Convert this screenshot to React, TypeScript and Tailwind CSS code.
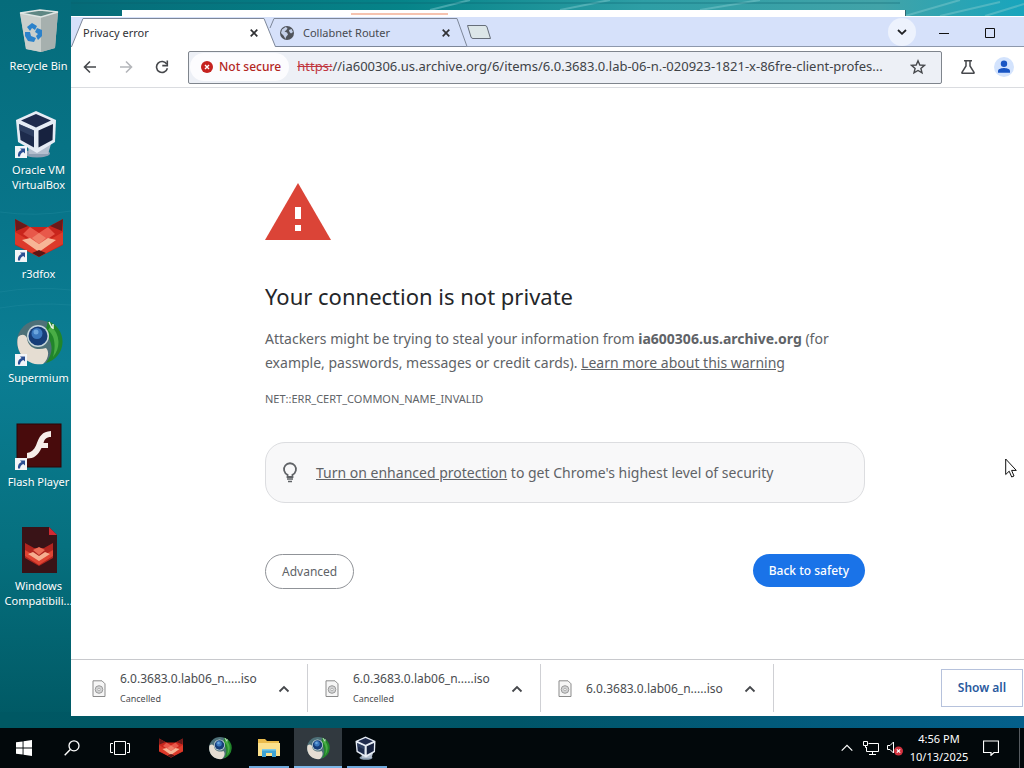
import type { ReactNode } from "react";

type IconProps = { className?: string };

function RecycleBin({ className }: IconProps) {
  return (
    <svg viewBox="0 -2 48 48" className={className} aria-hidden="true">
      <path d="M5 5 L25 2 L43 4 L40 40 L26 44 L11 41 Z" fill="#b9c1bf" />
      <path d="M5 5 L26 9 L26 44 L11 41 Z" fill="#c9cfcc" />
      <path d="M26 9 L43 4 L40 40 L26 44 Z" fill="#a6b0ae" />
      <path d="M5 5 L25 2 L43 4 L26 9 Z" fill="#5f8784" stroke="#dfe6e4" strokeWidth="1.4" />
      <g fill="#2b82cb">
        <path d="M12 19 l5 -4 5 3 -2 4 -3 -2 -2 3 z" />
        <path d="M22 20 l5 2 0 6 -4 4 -2 -4 2 -2 -3 -2 z" />
        <path d="M10 24 l5 0 1 4 5 2 -2 4 -6 -1 -3 -5 z" />
      </g>
    </svg>
  );
}

function VirtualBox({ className }: IconProps) {
  return (
    <svg viewBox="0 0 48 48" className={className} aria-hidden="true">
      <ellipse cx="22" cy="43.500" rx="13" ry="4" fill="#8fa0b4" />
      <path d="M13 36 L36 34 L33 44 L14 44 Z" fill="#b4bfce" />
      <path d="M21 1 L41 10 L40 32 L22 43 L3 32 L1 10 Z" fill="#e6ecf5" />
      <path d="M21 4 L36 10.500 L21 17.500 L6 10.500 Z" fill="#1f2b4d" />
      <path d="M4 14 L19 20.500 L19 37.500 L5.500 30 Z" fill="#1d2b4c" />
      <path d="M38 14 L23.500 20.500 L23.500 37.500 L37.500 30 Z" fill="#17223f" />
      <path d="M4 14 L19 20.500 L19 27 L4 20 Z" fill="#3a4c70" opacity=".6" />
    </svg>
  );
}

function FoxHead({ className }: IconProps) {
  return (
    <svg viewBox="0 0 48 40" className={className} aria-hidden="true">
      <path d="M0 1 L15 9 L33 9 L48 1 L48 27 L24 39 L0 27 Z" fill="#c9251c" />
      <path d="M0 1 L13 8 L1 13 Z" fill="#6a1a1a" />
      <path d="M48 1 L35 8 L47 13 Z" fill="#6a1a1a" />
      <path d="M15 9 L24 15 L33 9 L40 16 L24 27 L8 16 Z" fill="#e8584a" />
      <path d="M0 14 L24 28 L48 14 L48 26 L24 39 L0 26 Z" fill="#dc3a2a" />
      <path d="M7 22 L15 20 L24 26 L33 20 L41 22 L24 34 Z" fill="#f7b596" />
      <path d="M17 20 L24 15 L31 20 L24 26 Z" fill="#f07f68" />
      <path d="M17 35 L24 32 L31 35 L24 39 Z" fill="#5a1515" />
    </svg>
  );
}

function Supermium({ className }: IconProps) {
  return (
    <svg viewBox="0 0 48 48" className={className} aria-hidden="true">
      <circle cx="24" cy="24" r="22" fill="#4d7078" />
      <path d="M33 3 A22 22 0 0 1 31 45 C40 33 37 23 30 15 Z" fill="#21852a" />
      <path d="M36 8 A22 22 0 0 1 38 39 C41 27 40 18 33 12 Z" fill="#49ad45" />
      <path d="M3 19 C7 15 11 17 12 20 C13 30 22 33 31 30 C35 34 33 42 28 46 A22 22 0 0 1 3 19 Z" fill="#e5ddd2" />
      <circle cx="23" cy="18" r="11" fill="#c6d5da" />
      <circle cx="23" cy="18" r="9.500" fill="#163d78" />
      <circle cx="22" cy="15.500" r="5.500" fill="#3a77bd" />
      <circle cx="21" cy="14" r="2.500" fill="#6ca6de" />
      <path d="M34 4 l3 6 M38 6 l0 5" stroke="#e9f2e9" strokeWidth="1.500" />
    </svg>
  );
}

function FlashPlayer({ className }: IconProps) {
  return (
    <svg viewBox="0 0 48 48" className={className} aria-hidden="true">
      <rect x="2" y="2" width="44" height="43" fill="#480b0c" stroke="#2b0506" />
      <path
        d="M36 9 L36 15 C31 15 29.500 17.500 28.500 21 L33 21 L33 26 L26.500 26 C23 33.500 19 36.500 12 36.500 L12 31 C16 30.500 19 28 21 23.500 C24.500 14 27 9.500 36 9 Z"
        fill="#f6eeea"
      />
    </svg>
  );
}

function FoxDocument({ className }: IconProps) {
  return (
    <svg viewBox="0 0 48 48" className={className} aria-hidden="true">
      <path d="M7 1 L34 1 L42 9 L42 47 L7 47 Z" fill="#391317" />
      <path d="M34 1 L42 9 L34 9 Z" fill="#cf2a33" />
      <path d="M10 17 L19 22 L29 22 L38 17 L38 32 L24 40 L10 32 Z" fill="#b0251f" />
      <path d="M10 24 L24 32 L38 24 L38 30 L24 39 L10 30 Z" fill="#df4433" />
      <path d="M13 28 L18 26 L24 30 L30 26 L35 28 L24 35 Z" fill="#f6ae90" />
      <path d="M18 24 L24 21 L30 24 L24 29 Z" fill="#ea6d57" />
    </svg>
  );
}

function ShortcutArrow() {
  return (
    <svg viewBox="0 0 12 12" className="absolute bottom-0 left-0 size-3" aria-hidden="true">
      <rect width="12" height="12" fill="#f2f5f8" />
      <path d="M5 2.500 H10 V7.500 L8.300 5.900 C6.300 6.700 5.200 8 5 10.500 H3 C2.500 7.300 4 5 6.600 4.100 Z" fill="#2b4f93" />
    </svg>
  );
}

function FileExplorer({ className }: IconProps) {
  return (
    <svg viewBox="0 0 24 24" className={className} aria-hidden="true">
      <path d="M1 3 H8 L10 5 H22 V20 H1 Z" fill="#eabb4c" />
      <path d="M1 7 H23 V20 H1 Z" fill="#fbe08c" />
      <path d="M5 21 V13 H19 V21 H15 V17 H9 V21 Z" fill="#3fa4d4" />
      <path d="M5 13 H19 V14.500 H5 Z" fill="#7dcbe8" />
    </svg>
  );
}

const shortcuts: { label: string; icon: ReactNode; linked: boolean }[] = [
  { label: "Recycle Bin", icon: <RecycleBin className="size-12" />, linked: false },
  { label: "Oracle VM VirtualBox", icon: <VirtualBox className="size-12" />, linked: true },
  { label: "r3dfox", icon: <FoxHead className="h-10 w-12" />, linked: true },
  { label: "Supermium", icon: <Supermium className="size-12" />, linked: true },
  { label: "Flash Player", icon: <FlashPlayer className="size-12" />, linked: true },
  { label: "Windows Compatibili...", icon: <FoxDocument className="size-12" />, linked: false },
];

function Wallpaper() {
  return (
    <svg
      viewBox="0 0 1024 728"
      preserveAspectRatio="none"
      className="absolute inset-0 size-full"
      aria-hidden="true"
    >
      <defs>
        <linearGradient id="sea" x1="0" y1="0" x2="0" y2="1">
          <stop offset="0" stopColor="#056c7b" />
          <stop offset=".3" stopColor="#08758a" />
          <stop offset=".5" stopColor="#0b7e94" />
          <stop offset=".75" stopColor="#06707f" />
          <stop offset="1" stopColor="#005863" />
        </linearGradient>
        <linearGradient id="surface" x1="0" y1="0" x2="1" y2="0">
          <stop offset="0" stopColor="#056b78" />
          <stop offset=".35" stopColor="#068489" />
          <stop offset=".6" stopColor="#2e9ea5" />
          <stop offset=".85" stopColor="#42a3a8" />
          <stop offset="1" stopColor="#18a5bd" />
        </linearGradient>
        <linearGradient id="floor" x1="0" y1="0" x2="1" y2="0">
          <stop offset="0" stopColor="#005863" />
          <stop offset=".5" stopColor="#005568" />
          <stop offset="1" stopColor="#045f8b" />
        </linearGradient>
      </defs>
      <rect width="1024" height="728" fill="url(#sea)" />
      <rect x="71" width="953" height="20" fill="url(#surface)" />
      <rect y="712" width="1024" height="16" fill="url(#floor)" />
      <path d="M430 10 L470 0 M560 10 L610 0 M700 10 L760 0 M905 16 L960 0 M940 16 L1000 2 M985 16 L1024 4" stroke="#7cc8cc" strokeWidth="2" opacity=".5" />
      <path d="M71 3 H900" stroke="#0a5f6c" opacity=".5" />
      <path d="M0 292 Q35 286 71 290 M0 308 Q35 302 71 305 M0 212 Q35 217 71 211" stroke="#2a93a6" opacity=".3" fill="none" />
    </svg>
  );
}

function CloseMark() {
  return (
    <svg viewBox="0 0 8 8" className="size-2" aria-hidden="true">
      <path d="M.7.7 7.300 7.300M7.300.7.7 7.300" stroke="#303134" strokeWidth="1.700" />
    </svg>
  );
}

function TabStrip() {
  return (
    <div className="flex h-[30px] items-stretch bg-[#d6e1fa] pr-[35px]">
      <div className="relative w-[205px] shrink-0">
        <svg viewBox="0 0 205 30" className="absolute inset-0 size-full" aria-hidden="true">
          <path d="M0 31 L12 1.500 H193 L205 31 Z" fill="#fff" stroke="#7d8799" />
        </svg>
        <div className="relative flex h-full items-center justify-between pt-0.5 pr-[18px] pl-3 text-[11px] text-[#303134]">
          <span>Privacy error</span>
          <button type="button" aria-label="Close Privacy error">
            <CloseMark />
          </button>
        </div>
      </div>
      <div className="relative w-[190px] shrink-0">
        <svg viewBox="0 0 190 30" className="absolute inset-0 size-full overflow-visible" aria-hidden="true">
          <path d="M-6 11 L-2 1.500 H181 L191 29.500" fill="none" stroke="#7d8799" />
          <path d="M0 29.500 H190" stroke="#7d8799" />
        </svg>
        <div className="relative flex h-full items-center gap-2 pt-0.5 pr-4 pl-[3px] text-[11px] text-[#474a50]">
          <svg viewBox="0 0 16 16" className="size-4" aria-hidden="true">
            <circle cx="8" cy="8" r="7" fill="#50545b" />
            <path d="M3 4.500 L6.500 2 L8.500 3 L7.500 5 L5.500 6.500 L8 7.500 L9 9.500 L7 12 L6.500 14 L4.500 10.500 L2 8 Z M10 5 L12.500 4 L14 7 L12 8.500 L10.500 7 Z" fill="#c4d0e8" />
          </svg>
          <span className="grow">Collabnet Router</span>
          <button type="button" aria-label="Close Collabnet Router">
            <CloseMark />
          </button>
        </div>
      </div>
      <div className="flex grow items-center justify-between border-b border-[#8d98ac]">
        <button type="button" aria-label="New tab">
          <svg viewBox="0 0 26 16" className="h-4 w-[26px]" aria-hidden="true">
            <path d="M1.500 1.500 H19 Q20.500 1.500 21 3 L24.500 14.500 H7 Q5.500 14.500 5 13 Z" fill="#dce6e8" stroke="#666e7a" />
          </svg>
        </button>
        <div className="flex items-center">
          <button type="button" aria-label="Search tabs" className="grid size-7 place-items-center rounded-full bg-[#edf2fd]">
            <svg viewBox="0 0 10 6" className="h-1.5 w-2.5" aria-hidden="true">
              <path d="M1 1 5 4.800 9 1" fill="none" stroke="#202124" strokeWidth="1.800" />
            </svg>
          </button>
          <button type="button" aria-label="Minimize" className="ml-[5px] grid h-7 w-[46px] place-items-center pt-0.5">
            <svg viewBox="0 0 10 10" className="size-2.5" aria-hidden="true">
              <path d="M0 5.500H10" stroke="#111" />
            </svg>
          </button>
          <button type="button" aria-label="Maximize" className="mr-[11px] grid h-7 w-[46px] place-items-center pt-0.5">
            <svg viewBox="0 0 10 10" className="size-2.5" aria-hidden="true">
              <path d="M.5.5H9.500V9.500H.5Z" fill="none" stroke="#111" />
            </svg>
          </button>
        </div>
      </div>
    </div>
  );
}

function Toolbar() {
  return (
    <div className="flex h-[41px] items-center border-b border-[#dadce0] bg-white pr-[45px] pl-3">
      <button type="button" aria-label="Back">
        <svg viewBox="0 0 14 14" className="size-3.5" aria-hidden="true">
          <path d="M13 7H2M7 1.500 1.500 7 7 12.500" fill="none" stroke="#46484c" strokeWidth="1.600" />
        </svg>
      </button>
      <button type="button" aria-label="Forward" className="ml-[22px]">
        <svg viewBox="0 0 14 14" className="size-3.5" aria-hidden="true">
          <path d="M1 7H12M7 1.500 12.500 7 7 12.500" fill="none" stroke="#b4b6ba" strokeWidth="1.600" />
        </svg>
      </button>
      <button type="button" aria-label="Reload" className="ml-[22px]">
        <svg viewBox="0 0 14 14" className="size-3.5" aria-hidden="true">
          <path d="M11.800 4.200A5.500 5.500 0 1 0 12.400 8.300" fill="none" stroke="#46484c" strokeWidth="1.600" />
          <path d="M12.300.6V5.600H7.300" fill="none" stroke="#46484c" strokeWidth="1.600" />
        </svg>
      </button>
      <div className="ml-[19px] flex h-[33px] min-w-0 grow items-center rounded-xs border border-[#7f858d] bg-[#edf0f6] px-px">
        <button type="button" className="flex h-7 shrink-0 items-center gap-1.5 rounded-full bg-[#fcfcfe] pr-2 pl-[11px] text-[12px] font-medium text-[#b3261e]">
          <svg viewBox="0 0 12 12" className="size-3" aria-hidden="true">
            <circle cx="6" cy="6" r="6" fill="#c5221f" />
            <path d="M4 4 8 8M8 4 4 8" stroke="#fff" strokeWidth="1.400" />
          </svg>
          Not secure
        </button>
        <label htmlFor="address" className="ml-2 shrink-0 text-[13px] text-[#c0363f] line-through">
          https:
        </label>
        <input
          id="address"
          type="text"
          spellCheck={false}
          className="min-w-0 grow bg-transparent text-[13px] text-[#404347] outline-none"
          defaultValue="//ia600306.us.archive.org/6/items/6.0.3683.0.lab-06-n.-020923-1821-x-86fre-client-profes..."
        />
        <button type="button" aria-label="Bookmark this tab" className="mr-3.5 ml-2 shrink-0">
          <svg viewBox="0 0 16 16" className="size-4" aria-hidden="true">
            <path d="M8 1.800 9.800 6 14.400 6.400 10.900 9.400 12 13.900 8 11.500 4 13.900 5.100 9.400 1.600 6.400 6.200 6Z" fill="none" stroke="#46484c" strokeWidth="1.400" />
          </svg>
        </button>
      </div>
      <button type="button" aria-label="Experiments" className="ml-[18px] shrink-0">
        <svg viewBox="0 0 16 16" className="size-4" aria-hidden="true">
          <path d="M4 1.700H12M6 2V7L2 13.400Q1.600 14.300 2.600 14.300H13.400Q14.400 14.300 14 13.400L10 7V2" fill="none" stroke="#46484c" strokeWidth="1.500" />
        </svg>
      </button>
      <button type="button" aria-label="Profile" className="ml-[18px] shrink-0">
        <svg viewBox="0 0 20 20" className="size-5" aria-hidden="true">
          <circle cx="10" cy="10" r="10" fill="#d3e3fd" />
          <circle cx="10" cy="6.800" r="3.200" fill="#1a56c4" />
          <path d="M4 15.700V14C4 11.800 8 11 10 11S16 11.800 16 14V15.700Z" fill="#1a56c4" />
        </svg>
      </button>
    </div>
  );
}

function Interstitial() {
  return (
    <main className="grow bg-white px-6">
      <div className="mx-auto max-w-[600px] pt-[95px] text-[14px] leading-6 text-[#606367]">
        <svg viewBox="0 0 66 57" className="h-[57px] w-[66px]" aria-hidden="true">
          <path d="M33 0 66 57H0Z" fill="#db4437" />
          <path d="M30 24H36V36H30ZM30 42H36V48H30Z" fill="#fff" />
        </svg>
        <h1 className="mt-10 text-[22px] leading-8 text-[#242629]">Your connection is not private</h1>
        <p className="mt-[15px]">
          Attackers might be trying to steal your information from <strong>ia600306.us.archive.org</strong> (for
          example, passwords, messages or credit cards).{" "}
          <a href="#warning" className="underline">
            Learn more about this warning
          </a>
        </p>
        <p className="mt-3 text-[11px]">NET::ERR_CERT_COMMON_NAME_INVALID</p>
        <div className="mt-[31px] flex h-[61px] items-center gap-[18px] rounded-[20px] border border-[#dcdde0] bg-[#f8f8f9] px-4">
          <svg viewBox="0 0 16 22" className="h-[22px] w-4 shrink-0" aria-hidden="true">
            <path d="M5.500 15V12.700A6 6 0 1 1 10.500 12.700V15Z" fill="none" stroke="#606367" strokeWidth="1.800" />
            <path d="M5 17H11M6 19.500H10" stroke="#606367" strokeWidth="1.600" />
          </svg>
          <p>
            <a href="#protection" className="underline">
              Turn on enhanced protection
            </a>{" "}
            to get Chrome's highest level of security
          </p>
        </div>
        <div className="mt-[51px] flex items-start justify-between text-[12px]">
          <button type="button" className="h-[35px] rounded-full border border-[#909398] px-4">
            Advanced
          </button>
          <button type="button" className="h-[33px] rounded-full bg-[#1a73e8] px-4 font-medium text-white">
            Back to safety
          </button>
        </div>
      </div>
    </main>
  );
}

const downloads = [
  { name: "6.0.3683.0.lab06_n.....iso", status: "Cancelled" },
  { name: "6.0.3683.0.lab06_n.....iso", status: "Cancelled" },
  { name: "6.0.3683.0.lab06_n.....iso", status: "" },
];

function DownloadShelf() {
  return (
    <div className="flex h-[57px] items-center border-t border-[#c8c9cd] bg-white pr-9 pl-1">
      <ul className="flex grow">
        {downloads.map((item, index) => (
          <li key={index} className="flex h-12 w-[233px] items-center border-r border-[#cfd0d4] pt-0.5 pr-[17px] pl-[17px]">
            <svg viewBox="0 0 14 18" className="mr-3.5 h-[18px] w-3.5 shrink-0" aria-hidden="true">
              <path d="M1 .8H10L13 3.800V16.500H1Z" fill="#f6f6f6" stroke="#8b8b8b" />
              <circle cx="7" cy="9.500" r="3.800" fill="#d2d3d4" stroke="#9a9a9a" />
              <circle cx="7" cy="9.500" r="1.200" fill="#fff" stroke="#9a9a9a" strokeWidth=".7" />
            </svg>
            <div className="grow text-[#4a4c50]">
              <p className="text-[12px] leading-5">{item.name}</p>
              {item.status && <p className="text-[9px] leading-5">{item.status}</p>}
            </div>
            <button type="button" aria-label={"Options for download " + (index + 1)}>
              <svg viewBox="0 0 12 8" className="h-2 w-3" aria-hidden="true">
                <path d="M1.500 6.500 6 2 10.500 6.500" fill="none" stroke="#46484c" strokeWidth="1.800" />
              </svg>
            </button>
          </li>
        ))}
      </ul>
      <button type="button" className="h-[38px] w-[82px] shrink-0 border border-[#b6c2dc] text-[12px] font-semibold text-[#2a5a9e]">
        Show all
      </button>
    </div>
  );
}

function TaskbarApp({ label, state, children }: { label: string; state: string; children: ReactNode }) {
  return (
    <button
      type="button"
      aria-label={label}
      className={
        state === "active"
          ? "grid h-full w-12 place-items-center border-b-2 border-[#7db7e8] bg-[#31393f] pt-0.5"
          : "flex h-full w-12 flex-col items-center justify-between pt-2"
      }
    >
      {children}
      {state === "open" && <span className="h-0.5 w-10 bg-[#6fa9dc]" />}
    </button>
  );
}

function Taskbar() {
  return (
    <footer className="flex h-10 shrink-0 items-stretch bg-[#02080b] text-white">
      <button type="button" aria-label="Start" className="grid w-12 place-items-center">
        <svg viewBox="0 0 16 16" className="size-4" aria-hidden="true">
          <path d="M0 2.300 6.600 1.400V7.500H0ZM7.500 1.200 16 0V7.500H7.500ZM0 8.400H6.600V14.600L0 13.700ZM7.500 8.400H16V16L7.500 14.700Z" fill="#fff" />
        </svg>
      </button>
      <button type="button" aria-label="Search" className="grid w-12 place-items-center">
        <svg viewBox="0 0 16 16" className="size-4" aria-hidden="true">
          <circle cx="10" cy="5.800" r="5" fill="none" stroke="#fff" strokeWidth="1.300" />
          <path d="M6.300 9.500.7 15.300" stroke="#fff" strokeWidth="1.400" />
        </svg>
      </button>
      <button type="button" aria-label="Task view" className="grid w-12 place-items-center">
        <svg viewBox="0 0 20 16" className="h-4 w-5" aria-hidden="true">
          <path d="M4.500 1.500H15.500V14.500H4.500ZM3 3.500H.5V12.500H3M17 3.500H19.500V12.500H17" fill="none" stroke="#fff" />
        </svg>
      </button>
      <nav aria-label="Apps" className="ml-[3px] flex gap-px">
        <TaskbarApp label="r3dfox" state="pinned">
          <FoxHead className="mt-0.5 mb-auto h-5 w-6" />
        </TaskbarApp>
        <TaskbarApp label="Supermium" state="pinned">
          <Supermium className="mb-auto size-6" />
        </TaskbarApp>
        <TaskbarApp label="File Explorer" state="open">
          <FileExplorer className="size-6" />
        </TaskbarApp>
        <TaskbarApp label="Supermium window" state="active">
          <Supermium className="size-6" />
        </TaskbarApp>
        <TaskbarApp label="Oracle VM VirtualBox" state="open">
          <VirtualBox className="size-6" />
        </TaskbarApp>
      </nav>
      <div className="ml-auto flex items-center">
        <button type="button" aria-label="Show hidden icons">
          <svg viewBox="0 0 12 8" className="h-2 w-3" aria-hidden="true">
            <path d="M.7 6.700 6 1.300 11.300 6.700" fill="none" stroke="#fff" strokeWidth="1.200" />
          </svg>
        </button>
        <button type="button" aria-label="Network" className="ml-2.5">
          <svg viewBox="0 0 16 14" className="h-3.5 w-4" aria-hidden="true">
            <path d="M5.500 2.500H15.500V10.500H3.500V6M9.500 10.500V13M6 13.500H13M.5.500H4.500V4.500H.5ZM2.500 4.500V6.500H4" fill="none" stroke="#fff" />
          </svg>
        </button>
        <button type="button" aria-label="Volume" className="ml-2">
          <svg viewBox="0 0 16 16" className="size-4" aria-hidden="true">
            <path d="M.5 5.500H3L6.500 2V13L3 9.500H.5Z" fill="none" stroke="#fff" />
            <circle cx="11.500" cy="11" r="4.500" fill="#d3323f" />
            <path d="M9.800 9.300 13.200 12.700M13.200 9.300 9.800 12.700" stroke="#fff" strokeWidth="1.200" />
          </svg>
        </button>
        <time dateTime="2025-10-13T16:56" className="ml-1.5 flex w-[60px] flex-col text-center text-[11px] leading-[18px]">
          <span>4:56 PM</span>
          <span>10/13/2025</span>
        </time>
        <button type="button" aria-label="Notifications" className="ml-3.5">
          <svg viewBox="0 0 16 16" className="size-4" aria-hidden="true">
            <path d="M.5 1H15.500V12.500H11L8 15.300V12.500H.5Z" fill="none" stroke="#fff" strokeWidth="1.200" />
          </svg>
        </button>
        <button type="button" aria-label="Show desktop" className="ml-5 h-10 w-[5px] border-l border-[#565b60]" />
      </div>
    </footer>
  );
}

export default function App() {
  return (
    <div className="flex min-h-screen flex-col overflow-hidden font-['Noto_Sans','Open_Sans',sans-serif]">
      <div className="relative flex grow overflow-hidden bg-[#06707f]">
        <Wallpaper />
        <ul className="relative w-[77px] pt-1.5">
          {shortcuts.map((item) => (
            <li key={item.label} className="flex h-[104px] flex-col items-center text-center text-[11px] leading-[15px] text-white">
              <div className="relative flex size-12 items-center">
                {item.icon}
                {item.linked && <ShortcutArrow />}
              </div>
              <span className="mt-1 text-shadow-2xs">{item.label}</span>
            </li>
          ))}
        </ul>
        <div className="absolute top-2.5 right-[118px] left-[122px] h-3 border-r border-[#2f6670] bg-white">
          <div className="mt-[3px] ml-[229px] h-0.5 w-[97px] bg-[#f5c3b0]" />
        </div>
        <section
          aria-label="Privacy error window"
          className="absolute top-4 right-[-35px] bottom-3 left-[71px] flex flex-col border-t border-white bg-white"
        >
          <TabStrip />
          <Toolbar />
          <Interstitial />
          <DownloadShelf />
        </section>
        <svg viewBox="0 0 12 20" className="absolute top-[458px] left-[1005px] h-5 w-3" aria-hidden="true">
          <path d="M.7 1V16.500L4.200 13.200 6.700 19 9 18 6.600 12.400H11.300Z" fill="#fff" stroke="#111" />
        </svg>
      </div>
      <Taskbar />
    </div>
  );
}
